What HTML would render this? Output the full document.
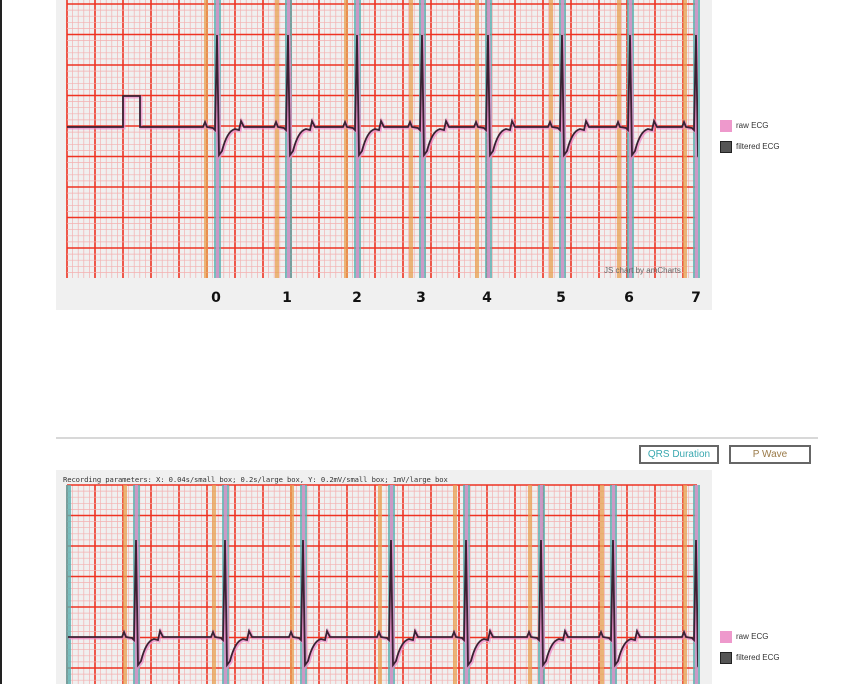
<!DOCTYPE html>
<html><head><meta charset="utf-8"><style>
html,body{margin:0;padding:0;background:#fff;width:845px;height:684px;overflow:hidden;font-family:"Liberation Sans",sans-serif}
.abs{position:absolute}
</style></head><body>
<div class="abs" style="left:0;top:0;width:2px;height:684px;background:#222"></div>
<div class="abs" style="left:56px;top:0;width:656px;height:310px;background:#f0f0f0"></div>
<div class="abs" style="left:56px;top:470px;width:656px;height:214px;background:#f0f0f0"></div>
<div class="abs" style="left:56px;top:437px;width:762px;height:2px;background:#d8d8d8"></div>
<div class="abs" style="left:639px;top:445px;width:80px;height:19px;border:2px solid #666;box-sizing:border-box;background:#fff;color:#3aa8b0;font-size:10px;text-align:center;line-height:15px">QRS Duration</div>
<div class="abs" style="left:729px;top:445px;width:82px;height:19px;border:2px solid #666;box-sizing:border-box;background:#fff;color:#9a7a48;font-size:10px;text-align:center;line-height:15px">P Wave</div>
<div class="abs" style="left:63px;top:475px;font-family:'DejaVu Sans Mono','Liberation Mono',monospace;font-size:7.2px;color:#333;white-space:nowrap;letter-spacing:-0.1px">Recording parameters: X: 0.04s/small box; 0.2s/large box, Y: 0.2mV/small box; 1mV/large box</div>
<svg class="abs" style="left:0;top:0" width="845" height="684" id="s"></svg>
<div class="abs" style="left:604px;top:266px;font-size:8px;color:#666">JS chart by amCharts</div>
<div class="abs" style="left:720px;top:120px;width:12px;height:12px;background:#ee99cc"></div>
<div class="abs" style="left:736px;top:121px;font-size:8px;color:#333">raw ECG</div>
<div class="abs" style="left:720px;top:141px;width:10px;height:10px;background:#555;border:1px solid #222"></div>
<div class="abs" style="left:736px;top:142px;font-size:8px;color:#333">filtered ECG</div>
<div class="abs" style="left:720px;top:631px;width:12px;height:12px;background:#ee99cc"></div>
<div class="abs" style="left:736px;top:632px;font-size:8px;color:#333">raw ECG</div>
<div class="abs" style="left:720px;top:652px;width:10px;height:10px;background:#555;border:1px solid #222"></div>
<div class="abs" style="left:736px;top:653px;font-size:8px;color:#333">filtered ECG</div>
<script>
var s=document.getElementById('s'),h='<defs><clipPath id="c1"><rect x="60" y="0" width="638" height="684"/></clipPath></defs>';
function grid(x0,y0,x1,y1,yoff){
 for(var x=x0;x<=x1+0.1;x+=5.6){var m=Math.abs(((x-x0)/28)-Math.round((x-x0)/28))<0.05;
  h+='<line x1="'+x+'" y1="'+y0+'" x2="'+x+'" y2="'+y1+'" stroke="'+(m?'#ee3322':'#f4b0b0')+'" stroke-width="'+(m?1.6:0.7)+'"/>';}
 for(var y=yoff;y<=y1+0.1;y+=6.1){if(y<y0)continue;var k=Math.round((y-yoff)/6.1);var m=k%5==0;
  h+='<line x1="'+x0+'" y1="'+y+'" x2="'+x1+'" y2="'+y+'" stroke="'+(m?'#ee3322':'#f4b0b0')+'" stroke-width="'+(m?1.6:0.7)+'"/>';}
}
function bands(rs,y0,y1){rs.forEach(function(r){
 h+='<rect x="'+(r-13)+'" y="'+y0+'" width="4" height="'+(y1-y0)+'" fill="#e8a050" opacity=".75"/>';
 h+='<rect x="'+(r-3)+'" y="'+y0+'" width="7" height="'+(y1-y0)+'" fill="#5ab0b0" opacity=".8"/>';
 h+='<rect x="'+(r-1)+'" y="'+y0+'" width="3" height="'+(y1-y0)+'" fill="#e090c8" opacity=".8"/>';});}
function ecg(rs,b,top,start,end,pulse){
 var d='M'+start+' '+b;
 if(pulse){d+=' L123 '+b+' L123 96 L140 96 L140 '+b;}
 rs.forEach(function(r){
  d+=' L'+(r-14)+' '+b+' L'+(r-12)+' '+(b-5)+' L'+(r-10)+' '+b+' L'+(r-4)+' '+(b+1)+' L'+(r-2)+' '+(b+3)+' L'+r+' '+top+' L'+(r+2)+' '+(b+28)+' L'+(r+5)+' '+(b+24)+' Q'+(r+10)+' '+(b+4)+' '+(r+18)+' '+(b+2)+' L'+(r+22)+' '+(b+3)+' L'+(r+24)+' '+(b-6)+' L'+(r+27)+' '+b;
 });
 d+=' L'+end+' '+b;
 h+='<g clip-path="url(#c1)"><path d="'+d+'" fill="none" stroke="#ee88c8" stroke-width="3" opacity=".7" transform="translate(1,1)"/>';
 h+='<path d="'+d+'" fill="none" stroke="#3a2233" stroke-width="1.8"/></g>';
}
grid(67,0,697,278,4);
var r1=[217,288,357,422,488,562,630,696];
bands(r1,0,278);
ecg(r1,127,35,67,697,true);
grid(67,485,697,684,485);
var r2=[136,225,303,391,466,541,613,696];
bands(r2,485,684);
h+='<rect x="66" y="485" width="5" height="199" fill="#5ab0b0" opacity=".8"/>';
ecg(r2,637,540,68,697,false);
var lx=[216,287,357,421,487,561,629,696];
lx.forEach(function(x,i){h+='<text x="'+x+'" y="302" font-family="DejaVu Sans,sans-serif" font-weight="bold" font-size="14" text-anchor="middle" fill="#111">'+i+'</text>';});
s.innerHTML=h;
</script>
</body></html>
